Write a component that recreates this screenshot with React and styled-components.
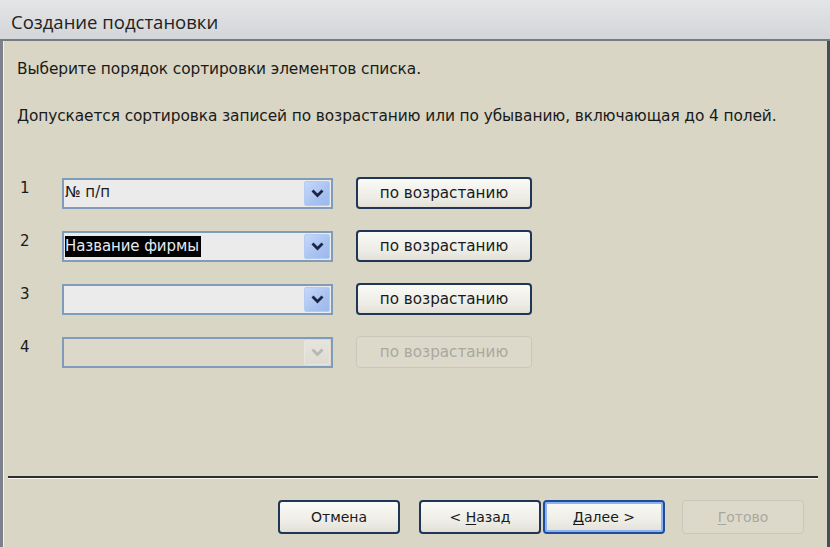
import React from 'react'
import styled, { createGlobalStyle } from 'styled-components'

const Global = createGlobalStyle`
  html, body { margin: 0; padding: 0; }
  body { width: 830px; height: 547px; overflow: hidden; background: #d9d6c5; }
`

const FONT = `Tahoma, "DejaVu Sans", Verdana, sans-serif`

const Window = styled.div`
  width: 830px;
  height: 547px;
  display: flex;
  flex-direction: column;
  font-family: ${FONT};
  color: #1a1a1a;
`

const TitleBar = styled.div`
  height: 41px;
  flex-shrink: 0;
  display: flex;
  align-items: center;
  padding-left: 11px;
  padding-top: 3px;
  box-sizing: border-box;
  background: linear-gradient(#e4e5e7, #d3d5d8);
  border-bottom: 2px solid #767b82;
  font-family: "Open Sans", "Noto Sans", sans-serif;
  font-size: 18.5px;
  color: #222;
`

const Body = styled.div`
  flex: 1;
  display: flex;
  flex-direction: column;
  background: #d9d6c5;
  border-left: 3px solid #7c8088;
  border-right: 3px solid #4a4e55;
  box-shadow: inset 1px 0 0 #f3f1e8;
`

const Content = styled.div`
  flex: 1;
  padding: 19px 0 0 14px;
  font-size: 15.4px;
`

const Para = styled.p`
  margin: 0 0 ${p => p.$gap || 0}px 0;
  line-height: 18px;
  letter-spacing: -0.1px;
`

const Rows = styled.div`
  display: flex;
  flex-direction: column;
  gap: 21px;
  margin-top: 52px;
`

const Row = styled.div`
  display: flex;
  align-items: center;
`

const Num = styled.span`
  width: 42px;
  padding-left: 3px;
  font-size: 15px;
  margin-top: -11px;
`

const Combo = styled.div`
  width: 271px;
  height: 31px;
  box-sizing: border-box;
  border: 2px solid #7f9db9;
  background: ${p => (p.$disabled ? '#dcd9cb' : '#ebebeb')};
  display: flex;
  align-items: stretch;
  padding: 1px;
`

const ComboText = styled.div`
  flex: 1;
  font-size: 15px;
  display: flex;
  align-items: flex-start;
  padding-top: 2px;
`

const Selected = styled.span`
  background: #000;
  color: #e6eaf0;
  padding: 1px 2px 2px 0;
  letter-spacing: -0.1px;
`

const Drop = styled.div`
  width: 24px;
  border-radius: 2px;
  display: flex;
  align-items: center;
  justify-content: center;
  background: ${p =>
    p.$disabled
      ? 'linear-gradient(#e6e4dc, #dddbd2)'
      : 'linear-gradient(135deg, #c6d8fa, #a8c2f0 60%, #9cb8ec)'};
  border: 1px solid ${p => (p.$disabled ? '#e8e6de' : '#b6cbf2')};
`

const SortBtn = styled.div`
  margin-left: 23px;
  width: 176px;
  height: 32px;
  box-sizing: border-box;
  border-radius: 4px;
  border: ${p => (p.$disabled ? '1.5px solid #c9c7ba' : '2px solid #1f3657')};
  background: ${p =>
    p.$disabled ? '#dcd9cb' : 'linear-gradient(#fafaf7, #ecebe4 70%, #e2e0d6)'};
  color: ${p => (p.$disabled ? '#aaa89e' : '#1a1a1a')};
  display: flex;
  align-items: center;
  justify-content: center;
  font-size: 15.2px;
`

const Separator = styled.div`
  margin: 0 9px 0 5px;
  height: 2px;
  background: #2e2e2e;
  border-bottom: 1px solid #f7f6f0;
`

const Footer = styled.div`
  display: flex;
  align-items: center;
  padding: 21px 0 13px 275px;
`

const Btn = styled.div`
  width: 122px;
  height: 34px;
  box-sizing: border-box;
  margin-right: ${p => p.$mr || 0}px;
  border-radius: 4px;
  border: ${p =>
    p.$disabled ? '1.5px solid #c9c7ba' : p.$focus ? '2px solid #1d4c9c' : '2px solid #1f3657'};
  box-shadow: ${p => (p.$focus ? 'inset 0 0 0 2px #8eb2ef' : 'none')};
  background: ${p =>
    p.$disabled ? '#dcd9cb' : 'linear-gradient(#fafaf7, #ecebe4 70%, #e2e0d6)'};
  color: ${p => (p.$disabled ? '#aaa89e' : '#1a1a1a')};
  display: flex;
  align-items: center;
  justify-content: center;
  font-size: 14px;
  u { text-underline-offset: 2px; }
`

const Chevron = ({ disabled }) => (
  <svg width="13" height="9" viewBox="0 0 13 9">
    <path
      d="M1.5 1.5 L6.5 6.5 L11.5 1.5"
      fill="none"
      stroke={disabled ? '#b9b8b0' : '#1a2548'}
      strokeWidth="2.8"
    />
  </svg>
)

const rows = [
  { n: '1', value: '№ п/п' },
  { n: '2', value: 'Название фирмы', selected: true },
  { n: '3', value: '' },
  { n: '4', value: '', disabled: true },
]

export default function App() {
  return (
    <>
      <Global />
      <Window>
        <TitleBar>Создание подстановки</TitleBar>
        <Body>
          <Content>
            <Para $gap={29}>Выберите порядок сортировки элементов списка.</Para>
            <Para>
              Допускается сортировка записей по возрастанию или по убыванию, включающая до 4 полей.
            </Para>
            <Rows>
              {rows.map(r => (
                <Row key={r.n}>
                  <Num>{r.n}</Num>
                  <Combo $disabled={r.disabled}>
                    <ComboText>
                      {r.selected ? <Selected>{r.value}</Selected> : r.value}
                    </ComboText>
                    <Drop $disabled={r.disabled}>
                      <Chevron disabled={r.disabled} />
                    </Drop>
                  </Combo>
                  <SortBtn $disabled={r.disabled}>по возрастанию</SortBtn>
                </Row>
              ))}
            </Rows>
          </Content>
          <Separator />
          <Footer>
            <Btn $mr={19}>Отмена</Btn>
            <Btn $mr={2}><span>&lt; <u>Н</u>азад</span></Btn>
            <Btn $mr={17} $focus><span><u>Д</u>алее &gt;</span></Btn>
            <Btn $disabled><span><u>Г</u>отово</span></Btn>
          </Footer>
        </Body>
      </Window>
    </>
  )
}
